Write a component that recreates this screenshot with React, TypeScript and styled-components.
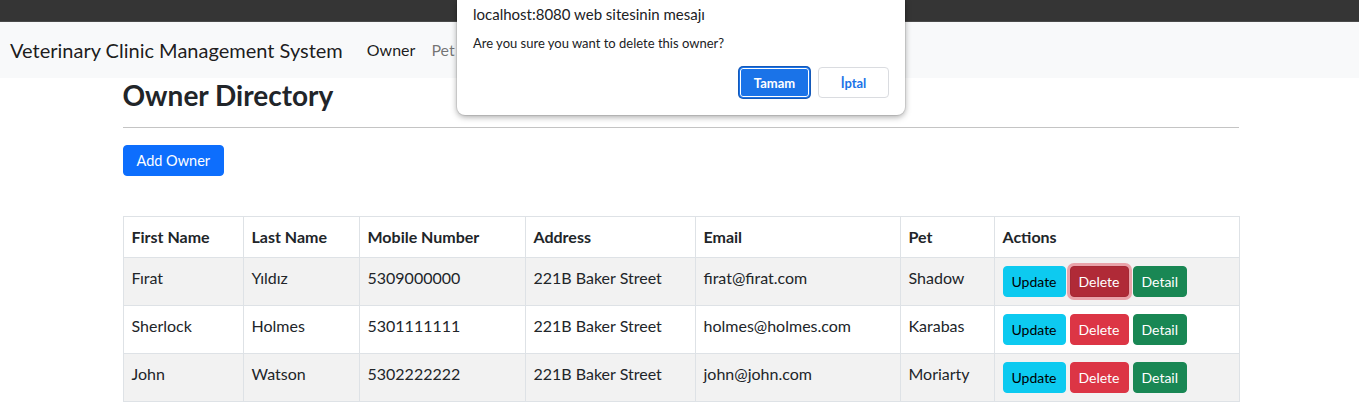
import React from "react";
import styled, { createGlobalStyle, css } from "styled-components";

interface Owner {
  firstName: string;
  lastName: string;
  mobile: string;
  address: string;
  email: string;
  pet: string;
}

const owners: Owner[] = [
  { firstName: "Fırat", lastName: "Yıldız", mobile: "5309000000", address: "221B Baker Street", email: "firat@firat.com", pet: "Shadow" },
  { firstName: "Sherlock", lastName: "Holmes", mobile: "5301111111", address: "221B Baker Street", email: "holmes@holmes.com", pet: "Karabas" },
  { firstName: "John", lastName: "Watson", mobile: "5302222222", address: "221B Baker Street", email: "john@john.com", pet: "Moriarty" },
];

const columns = [
  { label: "First Name", width: 120 },
  { label: "Last Name", width: 116 },
  { label: "Mobile Number", width: 166 },
  { label: "Address", width: 170 },
  { label: "Email", width: 205 },
  { label: "Pet", width: 94 },
  { label: "Actions", width: 245 },
];

const GlobalStyle = createGlobalStyle`
  * { box-sizing: border-box; }
  body {
    margin: 0;
    font-family: Lato, "Open Sans", "Liberation Sans", sans-serif;
    font-size: 16px;
    line-height: 1.5;
    color: #212529;
    background: #fff;
  }
`;

const Page = styled.div`
  position: relative;
  width: 100%;
  min-height: 420px;
  overflow: hidden;
`;

const BrowserStrip = styled.div`
  height: 22px;
  background: #353535;
  border-bottom: 1px solid #4a4a4a;
`;

const Navbar = styled.nav`
  display: flex;
  align-items: center;
  height: 56px;
  padding: 0 10px;
  background: #f8f9fa;
`;

const Brand = styled.a`
  font-size: 20px;
  line-height: 30px;
  margin-right: 16px;
  color: rgba(0, 0, 0, 0.9);
  text-decoration: none;
`;

const NavLink = styled.a<{ $active?: boolean }>`
  padding: 8px 8px;
  font-size: 16px;
  color: ${(p) => (p.$active ? "rgba(0, 0, 0, 0.9)" : "rgba(0, 0, 0, 0.55)")};
  text-decoration: none;
`;

const Container = styled.main`
  max-width: 1140px;
  margin: 0 auto;
  padding: 0 11px 0 13px;
`;

const Title = styled.h2`
  margin: 1px 0 0;
  font-size: 28px;
  font-weight: 700;
  line-height: 1.2;
`;

const Divider = styled.hr`
  margin: 14px 0 17px;
  border: 0;
  border-top: 1px solid #c4c4c4;
`;

const AddButton = styled.button`
  height: 31px;
  padding: 0 13px;
  border: 1px solid #0d6efd;
  border-radius: 4px;
  background: #0d6efd;
  color: #fff;
  font-family: inherit;
  font-size: 14.5px;
  cursor: pointer;
`;

const Table = styled.table`
  width: 100%;
  margin-top: 40px;
  border-collapse: collapse;
  table-layout: fixed;
  vertical-align: top;
`;

const Th = styled.th`
  padding: 8px;
  border: 1px solid #dee2e6;
  text-align: left;
  font-weight: 700;
  line-height: 24px;
`;

const Row = styled.tr<{ $striped: boolean }>`
  background: ${(p) => (p.$striped ? "#f2f2f2" : "#fff")};
`;

const Td = styled.td`
  padding: 8px;
  border: 1px solid #dee2e6;
  line-height: 24px;
  vertical-align: top;
  white-space: nowrap;
`;

const Actions = styled.div`
  display: flex;
  gap: 4px;
`;

type Variant = "info" | "danger" | "success";

const variants: Record<Variant, ReturnType<typeof css>> = {
  info: css`
    background: #0dcaf0;
    border-color: #0dcaf0;
    color: #000;
  `,
  danger: css`
    background: #dc3545;
    border-color: #dc3545;
    color: #fff;
  `,
  success: css`
    background: #198754;
    border-color: #198754;
    color: #fff;
  `,
};

const SmallButton = styled.button<{ $variant: Variant; $focused?: boolean }>`
  height: 31px;
  padding: 0 8px;
  border: 1px solid;
  border-radius: 4px;
  font-family: inherit;
  font-size: 14px;
  line-height: 21px;
  cursor: pointer;
  ${(p) => variants[p.$variant]}
  ${(p) =>
    p.$focused &&
    css`
      background: #b02a37;
      border-color: #a52834;
      box-shadow: 0 0 0 3px rgba(225, 83, 97, 0.5);
    `}
`;

const Dialog = styled.div`
  position: absolute;
  top: 0;
  left: 457px;
  width: 448px;
  height: 115px;
  padding: 4px 16px 0;
  background: #fff;
  border-radius: 0 0 8px 8px;
  box-shadow: 0 2px 6px rgba(0, 0, 0, 0.35), 0 0 0 1px rgba(0, 0, 0, 0.08);
  font-family: Lato, "Open Sans", "Liberation Sans", sans-serif;
  color: #202124;
`;

const DialogTitle = styled.div`
  font-size: 15px;
  line-height: 20px;
`;

const DialogMessage = styled.div`
  margin-top: 10px;
  font-size: 13px;
  line-height: 18px;
`;

const DialogButtons = styled.div`
  display: flex;
  justify-content: flex-end;
  gap: 8px;
  margin-top: 15px;
`;

const DialogButton = styled.button<{ $primary?: boolean }>`
  width: 71px;
  height: 31px;
  border-radius: 4px;
  font-family: inherit;
  font-size: 13px;
  font-weight: 700;
  cursor: pointer;
  ${(p) =>
    p.$primary
      ? css`
          background: #1a73e8;
          color: #fff;
          border: 1px solid #1a73e8;
          box-shadow: inset 0 0 0 1px #fff, 0 0 0 1px #1559b8;
        `
      : css`
          background: #fff;
          color: #1a73e8;
          border: 1px solid #dadce0;
        `}
`;

export default function App() {
  return (
    <Page>
      <GlobalStyle />
      <BrowserStrip />
      <Navbar>
        <Brand href="#">Veterinary Clinic Management System</Brand>
        <NavLink href="#" $active>
          Owner
        </NavLink>
        <NavLink href="#">Pet</NavLink>
      </Navbar>
      <Container>
        <Title>Owner Directory</Title>
        <Divider />
        <AddButton>Add Owner</AddButton>
        <Table>
          <colgroup>
            {columns.map((c) => (
              <col key={c.label} style={{ width: c.width }} />
            ))}
          </colgroup>
          <thead>
            <tr>
              {columns.map((c) => (
                <Th key={c.label}>{c.label}</Th>
              ))}
            </tr>
          </thead>
          <tbody>
            {owners.map((o, i) => (
              <Row key={o.email} $striped={i % 2 === 0}>
                <Td>{o.firstName}</Td>
                <Td>{o.lastName}</Td>
                <Td>{o.mobile}</Td>
                <Td>{o.address}</Td>
                <Td>{o.email}</Td>
                <Td>{o.pet}</Td>
                <Td>
                  <Actions>
                    <SmallButton $variant="info">Update</SmallButton>
                    <SmallButton $variant="danger" $focused={i === 0}>
                      Delete
                    </SmallButton>
                    <SmallButton $variant="success">Detail</SmallButton>
                  </Actions>
                </Td>
              </Row>
            ))}
          </tbody>
        </Table>
      </Container>
      <Dialog role="dialog">
        <DialogTitle>localhost:8080 web sitesinin mesajı</DialogTitle>
        <DialogMessage>Are you sure you want to delete this owner?</DialogMessage>
        <DialogButtons>
          <DialogButton $primary>Tamam</DialogButton>
          <DialogButton>İptal</DialogButton>
        </DialogButtons>
      </Dialog>
    </Page>
  );
}
